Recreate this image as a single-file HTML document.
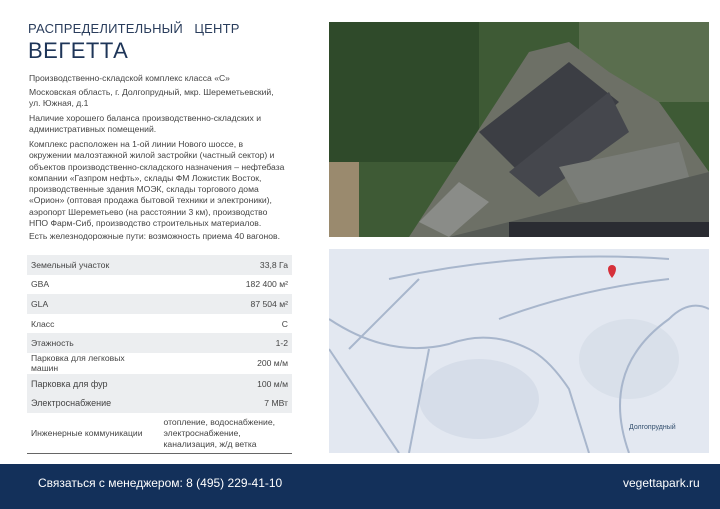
<!DOCTYPE html>
<html><head><meta charset="utf-8"><style>
body{margin:0;width:720px;height:509px;overflow:hidden;background:#fff;font-family:"Liberation Sans",sans-serif;position:relative}
.t{position:absolute;left:29px;color:#444;font-size:8.6px;line-height:11.3px}
.h1{position:absolute;left:28px;top:21px;font-size:13px;color:#2a3d5c;letter-spacing:0.2px}
.h2{position:absolute;left:28px;top:38px;font-size:22px;color:#1e3558;letter-spacing:0.5px}
table{position:absolute;left:27px;top:255px;width:265px;border-collapse:collapse;font-size:8.6px;color:#444}
td{padding:0 4px;height:19.6px}
td:last-child{text-align:right}
tr.s td{background:#eceef0}
.foot{position:absolute;left:0;top:464px;width:720px;height:45px;background:#13305a;color:#fff;font-size:12px}
</style></head><body>
<div class="h1">РАСПРЕДЕЛИТЕЛЬНЫЙ &nbsp; ЦЕНТР</div>
<div class="h2">ВЕГЕТТА</div>
<div class="t" style="top:73px">Производственно-складской комплекс класса «С»</div>
<div class="t" style="top:87px">Московская область, г. Долгопрудный, мкр. Шереметьевский,<br>ул. Южная, д.1</div>
<div class="t" style="top:113px">Наличие хорошего баланса производственно-складских и<br>административных помещений.</div>
<div class="t" style="top:139px">Комплекс расположен на 1-ой линии Нового шоссе, в<br>окружении малоэтажной жилой застройки (частный сектор) и<br>объектов производственно-складского назначения – нефтебаза<br>компании «Газпром нефть», склады ФМ Ложистик Восток,<br>производственные здания МОЭК, склады торгового дома<br>«Орион» (оптовая продажа бытовой техники и электроники),<br>аэропорт Шереметьево (на расстоянии 3 км), производство<br>НПО Фарм-Сиб, производство строительных материалов.</div>
<div class="t" style="top:231px">Есть железнодорожные пути: возможность приема 40 вагонов.</div>
<table>
<tr class="s"><td>Земельный участок</td><td>33,8 Га</td></tr>
<tr><td>GBA</td><td>182 400 м²</td></tr>
<tr class="s"><td>GLA</td><td>87 504 м²</td></tr>
<tr><td>Класс</td><td>С</td></tr>
<tr class="s"><td>Этажность</td><td>1-2</td></tr>
<tr><td style="line-height:10px;height:21px">Парковка для легковых<br>машин</td><td>200 м/м</td></tr>
<tr class="s"><td style="font-size:9px">Парковка для фур</td><td>100 м/м</td></tr>
<tr class="s"><td style="font-size:9px">Электроснабжение</td><td>7 МВт</td></tr>
<tr style="border-bottom:1.5px solid #666"><td style="height:40px">Инженерные коммуникации</td><td style="text-align:left;line-height:11px">отопление, водоснабжение,<br>электроснабжение,<br>канализация, ж/д ветка</td></tr>
</table>
<svg style="position:absolute;left:329px;top:22px" width="380" height="215" viewBox="0 0 380 215">
<rect width="380" height="215" fill="#3e5a35"/>
<rect x="0" y="0" width="150" height="140" fill="#2f4a2a"/>
<rect x="250" y="0" width="130" height="80" fill="#5a6e4e"/>
<path d="M80 215 L200 30 L240 20 L280 50 L330 80 L380 150 L380 215Z" fill="#6d7066"/>
<path d="M150 110 L240 40 L290 80 L200 160Z" fill="#3c3e44"/>
<path d="M180 150 L280 70 L300 110 L210 175Z" fill="#45474d"/>
<path d="M230 145 L350 120 L370 190 L250 180Z" fill="#7a7d78"/>
<path d="M90 200 L130 160 L160 180 L120 215Z" fill="#8a8c88"/>
<path d="M120 215 L380 150 L380 200 L200 215Z" fill="#565a55"/>
<rect x="0" y="140" width="30" height="75" fill="#9a8a6e"/>
<rect x="180" y="200" width="200" height="15" fill="#2a2c32"/>
</svg>
<svg style="position:absolute;left:329px;top:249px" width="380" height="204" viewBox="0 0 380 204">
<rect width="380" height="204" fill="#e3e8f1"/>
<ellipse cx="150" cy="150" rx="60" ry="40" fill="#d6dde9"/>
<ellipse cx="300" cy="110" rx="50" ry="40" fill="#d9e0ea"/>
<g fill="none" stroke="#a8b6cc" stroke-width="2">
<path d="M0 70 Q60 110 120 95 Q160 80 200 100 Q220 110 240 140 L260 204"/>
<path d="M0 100 L70 204"/>
<path d="M20 100 L90 30"/>
<path d="M60 30 Q200 0 340 10"/>
<path d="M170 70 Q250 40 340 30"/>
<path d="M300 204 Q270 120 340 70 Q360 50 380 60"/>
<path d="M80 204 L100 100"/>
</g>
<path d="M279 20 a4 4 0 1 1 8 0 q0 4 -4 9 q-4 -5 -4 -9z" fill="#d6303a"/>
<text x="300" y="180" font-size="7" fill="#34506f">Долгопрудный</text>
</svg>
<div class="foot"><span style="position:absolute;left:38px;top:12px">Связаться с менеджером: 8 (495) 229-41-10</span><span style="position:absolute;left:623px;top:12px">vegettapark.ru</span></div>
</body></html>
